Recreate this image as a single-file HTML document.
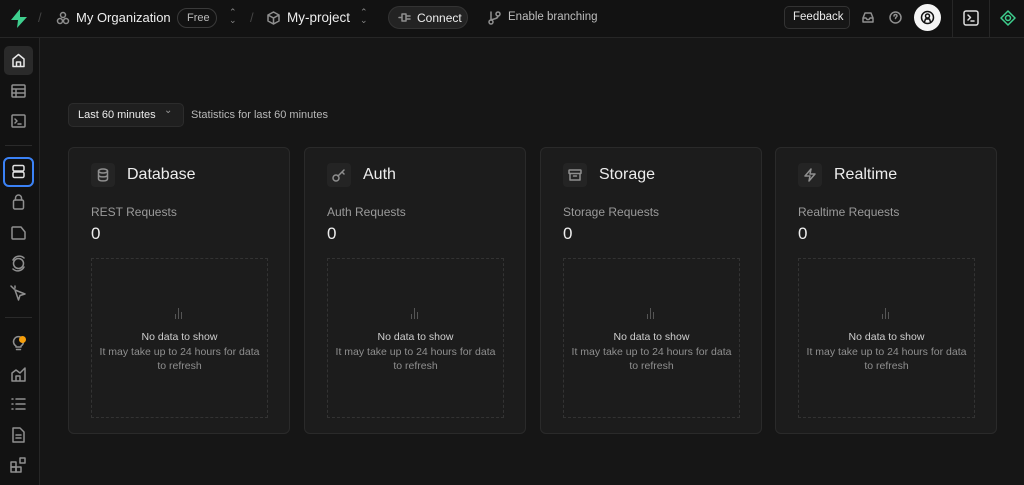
<!DOCTYPE html>
<html><head><meta charset="utf-8"><style>
*{box-sizing:border-box;margin:0;padding:0}
body{width:1024px;height:485px;background:#161616;font-family:"Liberation Sans",sans-serif;color:#ededed;position:relative;overflow:hidden}
.hdr{position:absolute;left:0;top:0;width:1024px;height:38px;background:#121212;border-bottom:1px solid #262626}
.side{position:absolute;left:0;top:38px;width:40px;height:447px;background:#121212;border-right:1px solid #262626}
.abs{position:absolute}
.t{position:absolute;white-space:nowrap}
svg{position:absolute;fill:none;stroke:#8f8f8f;stroke-width:1.5;stroke-linecap:round;stroke-linejoin:round}
.card{position:absolute;top:147px;width:222px;height:287px;background:#1c1c1c;border:1px solid #2a2a2a;border-radius:6px}
.card .ib{position:absolute;left:22px;top:15px;width:24px;height:24px;background:#242424;border-radius:4px}
.card .ti{position:absolute;left:58px;top:18px;font-size:16px;color:#ededed}
.card .lb{position:absolute;left:22px;top:57px;font-size:12px;color:#9a9a9a}
.card .v{position:absolute;left:22px;top:76px;font-size:17px;color:#ededed}
.card .ch{position:absolute;left:22px;top:110px;width:177px;height:160px;border:1px dashed #333}
.ch .a{position:absolute;top:72px;width:100%;text-align:center;font-size:10.5px;color:#cfcfcf}
.ch .b{position:absolute;top:86px;width:100%;text-align:center;font-size:10.5px;color:#8f8f8f;line-height:14px;padding:0 4px}
.ch .bars{position:absolute;left:82px;top:48px;width:10px;height:12px}
.ch .bars i{position:absolute;bottom:0;width:1px;background:#555}
</style></head><body>
<div class="hdr"></div>
<div class="side"></div>
<!-- header -->
<svg style="left:10px;top:9px;stroke:none;fill:#3ecf8e" width="18" height="19" viewBox="0 0 18 19"><path d="M10 0 L1 11 H8 L7 19 L17 8 H10 Z"/></svg>
<div class="t" style="left:38px;top:10px;color:#444;font-size:13px">/</div>
<svg style="left:56px;top:11px" width="14" height="14" viewBox="0 0 14 14"><circle cx="7" cy="4" r="2.5"/><circle cx="4" cy="10" r="2.5"/><circle cx="10" cy="10" r="2.5"/></svg>
<div class="t" style="left:76px;top:10px;font-size:13px">My Organization</div>
<div class="abs" style="left:177px;top:8px;width:40px;height:20px;border:1px solid #3a3a3a;border-radius:10px"></div>
<div class="t" style="left:187px;top:12px;font-size:11px;color:#bbb">Free</div>
<div class="t" style="left:229px;top:8px;font-size:9px;color:#888;line-height:8px">⌃<br>⌄</div>
<div class="t" style="left:250px;top:10px;color:#444;font-size:13px">/</div>
<svg style="left:267px;top:11px" width="13" height="14" viewBox="0 0 13 14"><path d="M6.5 1 L12 4 V10 L6.5 13 L1 10 V4 Z M1 4 L6.5 7 L12 4 M6.5 7 V13"/></svg>
<div class="t" style="left:287px;top:10px;font-size:13.5px">My-project</div>
<div class="t" style="left:360px;top:8px;font-size:9px;color:#888;line-height:8px">⌃<br>⌄</div>
<div class="abs" style="left:388px;top:6px;width:80px;height:23px;background:#232323;border:1px solid #333;border-radius:12px"></div>
<svg style="left:398px;top:12px" width="14" height="11" viewBox="0 0 14 11"><path d="M1 5.5 H4 M4 2 H8 V9 H4 Z M8 4 H12 M8 7 H12"/></svg>
<div class="t" style="left:417px;top:11px;font-size:12px">Connect</div>
<svg style="left:488px;top:11px" width="13" height="14" viewBox="0 0 13 14"><circle cx="3" cy="11" r="2"/><circle cx="10" cy="3" r="2"/><path d="M3 1 V9 M10 5 C10 8 5 8 3 9"/></svg>
<div class="t" style="left:508px;top:11px;font-size:11.5px;color:#bdbdbd">Enable branching</div>
<div class="abs" style="left:784px;top:6px;width:66px;height:23px;border:1px solid #333;border-radius:5px;background:#161616"></div>
<div class="t" style="left:793px;top:11px;font-size:11.5px">Feedback</div>
<svg style="left:862px;top:12px" width="12" height="11" viewBox="0 0 12 11"><path d="M1 6 L3 1 H9 L11 6 V10 H1 Z M1 6 H4 L5 7.5 H7 L8 6 H11"/></svg>
<svg style="left:889px;top:11px" width="13" height="13" viewBox="0 0 13 13"><circle cx="6.5" cy="6.5" r="5.5"/><path d="M5 5 C5 3 8 3 8 5 C8 6 6.5 6 6.5 7.5"/></svg>
<div class="abs" style="left:914px;top:4px;width:27px;height:27px;border-radius:50%;background:#f5f5f5"></div>
<svg style="left:920px;top:10px;stroke:#111" width="15" height="15" viewBox="0 0 15 15"><circle cx="7.5" cy="7.5" r="6"/><circle cx="7.5" cy="6" r="2"/><path d="M4.5 12 L5.5 9 H9.5 L10.5 12"/></svg>
<div class="abs" style="left:952px;top:0;width:1px;height:38px;background:#262626"></div>
<div class="abs" style="left:989px;top:0;width:1px;height:38px;background:#262626"></div>
<svg style="left:963px;top:10px;stroke:#ddd" width="16" height="16" viewBox="0 0 16 16"><rect x="1" y="1" width="14" height="14" rx="2"/><path d="M5 5 L7.5 7.5 L5 10 M8 11 H11"/></svg>
<svg style="left:1000px;top:10px;stroke:#3ecf8e" width="16" height="16" viewBox="0 0 16 16"><path d="M8 1 L15 8 L8 15 L1 8 Z"/><circle cx="8" cy="8" r="2.5"/></svg>
<!-- sidebar -->
<div class="abs" style="left:4px;top:46px;width:29px;height:29px;background:#2a2a2a;border-radius:5px"></div>
<svg style="left:11px;top:53px;stroke:#e8e8e8" width="15" height="15" viewBox="0 0 15 15"><path d="M2 6 L7.5 1.5 L13 6 V13.5 H2 Z M5.5 13.5 V9 H9.5 V13.5"/></svg>
<svg style="left:11px;top:84px" width="15" height="14" viewBox="0 0 15 14"><rect x="1" y="1" width="13" height="12" rx="1"/><path d="M1 5 H14 M1 9 H14 M5 5 V13"/></svg>
<svg style="left:11px;top:114px" width="15" height="14" viewBox="0 0 15 14"><rect x="1" y="1" width="13" height="12" rx="1"/><path d="M4 5 L6 7 L4 9 M7 10 H10"/></svg>
<div class="abs" style="left:5px;top:145px;width:27px;height:1px;background:#2a2a2a"></div>
<div class="abs" style="left:3px;top:157px;width:31px;height:30px;border:2px solid #3b82f6;border-radius:6px"></div>
<svg style="left:11px;top:164px;stroke:#e0e0e0" width="15" height="15" viewBox="0 0 15 15"><rect x="2" y="1.5" width="11" height="5.5" rx="1.5"/><rect x="2" y="8" width="11" height="5.5" rx="1.5"/></svg>
<svg style="left:12px;top:194px" width="13" height="16" viewBox="0 0 13 16"><path d="M3.5 6 V4 A3 3 0 0 1 9.5 4 V6"/><rect x="1.5" y="6" width="10" height="9" rx="1.5"/></svg>
<svg style="left:11px;top:226px" width="15" height="14" viewBox="0 0 15 14"><path d="M1 3 V12 A1 1 0 0 0 2 13 H13 A1 1 0 0 0 14 12 V6 L10 1 H2 A1 1 0 0 0 1 2 Z"/></svg>
<svg style="left:10px;top:255px" width="17" height="17" viewBox="0 0 17 17"><circle cx="8.5" cy="8.5" r="5"/><path d="M3 5 A7 7 0 0 1 14 3 M14 12 A7 7 0 0 1 3 14"/></svg>
<svg style="left:10px;top:285px" width="16" height="16" viewBox="0 0 16 16"><path d="M5 5 L15 9 L10 10.5 L8.5 15 Z M1 1 L4 4 M5 1 L5 3"/></svg>
<div class="abs" style="left:5px;top:317px;width:27px;height:1px;background:#2a2a2a"></div>
<svg style="left:12px;top:335px" width="13" height="17" viewBox="0 0 13 17"><path d="M4 11 A5 5 0 1 1 9 11 V12 H4 Z M4.5 14.5 H8.5"/></svg>
<div class="abs" style="left:19px;top:336px;width:7px;height:7px;border-radius:50%;background:#f59e0b"></div>
<svg style="left:11px;top:366px" width="15" height="16" viewBox="0 0 15 16"><path d="M1 15 V7 L5 4 L9 7 L14 2 V15 Z M5 15 V10 H9 V15"/></svg>
<svg style="left:11px;top:397px" width="15" height="14" viewBox="0 0 15 14"><path d="M5 2 H14 M5 7 H14 M5 12 H14 M1 2 H2 M1 7 H2 M1 12 H2"/></svg>
<svg style="left:12px;top:427px" width="13" height="16" viewBox="0 0 13 16"><path d="M1 1 H8 L12 5 V15 H1 Z M4 8 H9 M4 11 H9"/></svg>
<svg style="left:10px;top:457px" width="16" height="16" viewBox="0 0 16 16"><rect x="1" y="5" width="5" height="5"/><rect x="1" y="10" width="5" height="5"/><rect x="6" y="10" width="5" height="5"/><rect x="10" y="1" width="5" height="5"/></svg>
<!-- main -->
<div class="abs" style="left:68px;top:103px;width:116px;height:24px;background:#1f1f1f;border:1px solid #2c2c2c;border-radius:5px"></div>
<div class="t" style="left:78px;top:109px;font-size:11px">Last 60 minutes</div>
<div class="t" style="left:164px;top:105px;font-size:10px;color:#999">⌄</div>
<div class="t" style="left:191px;top:109px;font-size:11px;color:#b8b8b8">Statistics for last 60 minutes</div>

<div class="card" style="left:68px"><div class="ib"></div>
<svg style="left:27px;top:20px" width="14" height="14" viewBox="0 0 14 14"><ellipse cx="7" cy="3" rx="4.5" ry="2"/><path d="M2.5 3 V11 C2.5 13.5 11.5 13.5 11.5 11 V3 M2.5 7 C2.5 9.5 11.5 9.5 11.5 7"/></svg>
<div class="ti">Database</div><div class="lb">REST Requests</div><div class="v">0</div>
<div class="ch"><div class="bars"><i style="left:1px;height:5px"></i><i style="left:4px;height:11px"></i><i style="left:7px;height:7px"></i></div><div class="a">No data to show</div><div class="b">It may take up to 24 hours for data to refresh</div></div></div>

<div class="card" style="left:304px"><div class="ib"></div>
<svg style="left:27px;top:20px" width="14" height="14" viewBox="0 0 14 14"><circle cx="4" cy="10" r="3"/><path d="M6 8 L12 2 M10 4 L12 6"/></svg>
<div class="ti">Auth</div><div class="lb">Auth Requests</div><div class="v">0</div>
<div class="ch"><div class="bars"><i style="left:1px;height:5px"></i><i style="left:4px;height:11px"></i><i style="left:7px;height:7px"></i></div><div class="a">No data to show</div><div class="b">It may take up to 24 hours for data to refresh</div></div></div>

<div class="card" style="left:540px"><div class="ib"></div>
<svg style="left:27px;top:20px" width="14" height="14" viewBox="0 0 14 14"><rect x="1" y="2" width="12" height="3.5" rx="0.5"/><path d="M2 5.5 V12 H12 V5.5 M5.5 8 H8.5"/></svg>
<div class="ti">Storage</div><div class="lb">Storage Requests</div><div class="v">0</div>
<div class="ch"><div class="bars"><i style="left:1px;height:5px"></i><i style="left:4px;height:11px"></i><i style="left:7px;height:7px"></i></div><div class="a">No data to show</div><div class="b">It may take up to 24 hours for data to refresh</div></div></div>

<div class="card" style="left:775px"><div class="ib"></div>
<svg style="left:27px;top:20px" width="14" height="14" viewBox="0 0 14 14"><path d="M8 1 L2 8 H7 L6 13 L12 6 H7 Z"/></svg>
<div class="ti">Realtime</div><div class="lb">Realtime Requests</div><div class="v">0</div>
<div class="ch"><div class="bars"><i style="left:1px;height:5px"></i><i style="left:4px;height:11px"></i><i style="left:7px;height:7px"></i></div><div class="a">No data to show</div><div class="b">It may take up to 24 hours for data to refresh</div></div></div>
</body></html>
